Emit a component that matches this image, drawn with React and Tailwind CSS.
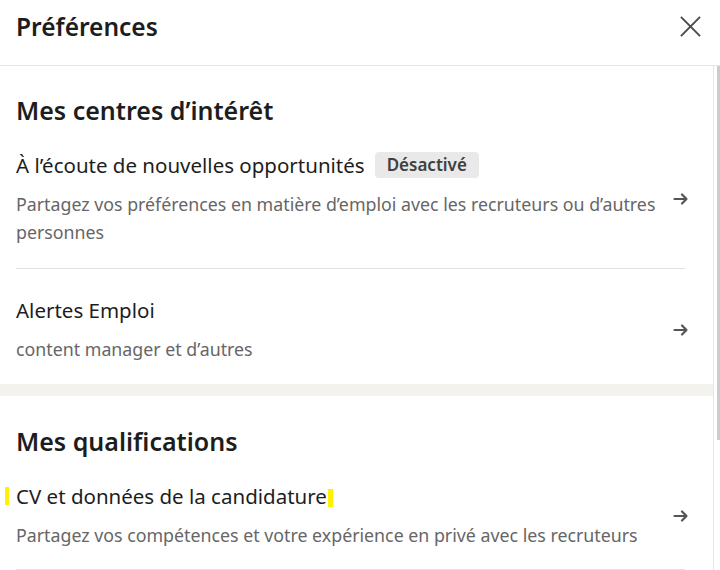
import React from 'react';

const font = { fontFamily: '"Noto Sans", "Open Sans", sans-serif' };

const Arrow = () => (
  <svg width="16" height="16" viewBox="0 0 16 16" fill="none" className="shrink-0 text-[#555555]">
    <path d="M1.5 8h12M9 3.5L13.5 8 9 12.5" stroke="currentColor" strokeWidth="2.2" strokeLinecap="round" strokeLinejoin="round" />
  </svg>
);

const Item = ({ title, desc, pt, pb, children }) => (
  <div className={`flex items-center justify-between pl-4 pr-[24px] ${pt} ${pb}`}>
    <div className="flex flex-col gap-[11px]">
      {children || <div className="text-[20.5px] leading-[28px] text-[#1d1d1d]">{title}</div>}
      <div className="text-[17.8px] leading-[28px] text-[#666666] whitespace-nowrap">{desc}</div>
    </div>
    <Arrow />
  </div>
);

export default function App() {
  return (
    <div className="w-[720px] h-[570px] overflow-hidden bg-white flex flex-col" style={font}>
      {/* en-tête */}
      <div className="h-[66px] shrink-0 flex items-center justify-between pl-4 pr-[18px] pb-[10px] border-b border-[#e6e6e6]">
        <h1 className="text-[24.5px] font-semibold text-[#1d1d1d]">Préférences</h1>
        <svg width="23" height="23" viewBox="0 0 24 24" fill="none" className="text-[#4a4a4a] -mt-[2px]">
          <path d="M2 2l20 20M22 2L2 22" stroke="currentColor" strokeWidth="2" />
        </svg>
      </div>

      <div className="flex flex-1 min-h-0">
        <div className="w-[713px] flex flex-col">
          {/* Mes centres d'intérêt */}
          <h2 className="pl-4 pt-[28px] text-[25px] leading-[32px] font-semibold text-[#1d1d1d]">
            Mes centres d’intérêt
          </h2>
          <Item
            pt="pt-[25px]"
            pb="pb-[22px]"
            desc={<>Partagez vos préférences en matière d’emploi avec les recruteurs ou d’autres<br />personnes</>}
          >
            <div className="flex items-center gap-2 text-[20.5px] leading-[28px] text-[#1d1d1d]">
              À l’écoute de nouvelles opportunités
              <span className="h-[26px] px-[12px] ml-[2px] flex items-center rounded bg-[#e9e9e9] text-[17px] font-semibold text-[#404040]">
                Désactivé
              </span>
            </div>
          </Item>
          <div className="ml-4 mr-[28px] border-t border-[#e0e0e0]" />
          <Item pt="pt-[27px]" pb="pb-[21px]" title="Alertes Emploi" desc="content manager et d’autres" />

          <div className="h-[12px] bg-[#f3f2ef]" />

          {/* Mes qualifications */}
          <h2 className="pl-4 pt-[29px] text-[25px] leading-[32px] font-semibold text-[#1d1d1d]">
            Mes qualifications
          </h2>
          <Item
            pt="pt-[25px]"
            pb="pb-[20px]"
            desc="Partagez vos compétences et votre expérience en privé avec les recruteurs"
          >
            <div className="-ml-[11px] flex items-center text-[20.5px] leading-[28px] text-[#1d1d1d]">
              <span className="w-[4px] h-[18px] bg-[#fff200] mr-[7px]" />
              CV et données de la candidature
              <span className="w-[5px] h-[18px] bg-[#fff200] ml-[1px] mt-[4px]" />
            </div>
          </Item>
          <div className="ml-4 mr-[28px] border-t border-[#e0e0e0]" />
        </div>

        {/* barre de défilement */}
        <div className="w-[7px] border-l border-[#e6e6e6] flex">
          <div className="ml-[3px] w-[3px] h-[374px] bg-[#cccccc]" />
        </div>
      </div>
    </div>
  );
}
